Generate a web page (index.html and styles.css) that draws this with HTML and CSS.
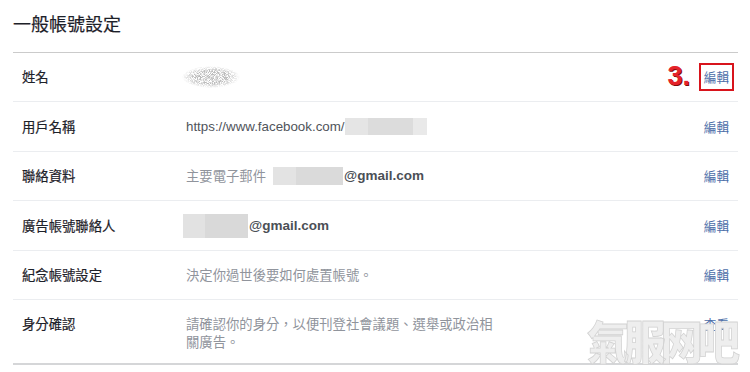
FILE: index.html
```html
<!DOCTYPE html>
<html lang="zh-TW">
<head>
<meta charset="utf-8">
<title>一般帳號設定</title>
<link rel="stylesheet" href="styles.css">
</head>
<body>
<div class="page">
  <h1 class="title">一般帳號設定</h1>
  <div class="rows">
    <div class="row">
      <div class="label">姓名</div>
      <div class="value">
        <svg class="blurname" width="58" height="22" viewBox="0 0 58 22">
          <defs>
            <filter id="noise" x="0" y="0" width="100%" height="100%">
              <feTurbulence type="fractalNoise" baseFrequency="1.2" numOctaves="2" seed="7"/>
              <feColorMatrix type="matrix" values="0 0 0 0 0.5  0 0 0 0 0.5  0 0 0 0 0.5  4 0 0 0 -1.5"/>
            </filter>
            <radialGradient id="fade" cx="0.5" cy="0.5" r="0.5">
              <stop offset="0.6" stop-color="#fff"/>
              <stop offset="1" stop-color="#000"/>
            </radialGradient>
            <mask id="blob">
              <rect width="58" height="22" fill="url(#fade)"/>
            </mask>
          </defs>
          <rect width="58" height="22" filter="url(#noise)" mask="url(#blob)"/>
        </svg>
      </div>
      <a class="edit marked" href="#">編輯<span class="step">3.</span></a>
    </div>
    <div class="row">
      <div class="label">用戶名稱</div>
      <div class="value url">https://www.facebook.com/<span class="mask mask-url"></span></div>
      <a class="edit" href="#">編輯</a>
    </div>
    <div class="row">
      <div class="label">聯絡資料</div>
      <div class="value"><span class="muted cjk">主要電子郵件</span><span class="mask mask-mail"></span><b class="mail">@gmail.com</b></div>
      <a class="edit" href="#">編輯</a>
    </div>
    <div class="row">
      <div class="label">廣告帳號聯絡人</div>
      <div class="value shift"><span class="mask mask-ad"></span><b class="mail">@gmail.com</b></div>
      <a class="edit" href="#">編輯</a>
    </div>
    <div class="row">
      <div class="label">紀念帳號設定</div>
      <div class="value muted cjk">決定你過世後要如何處置帳號。</div>
      <a class="edit" href="#">編輯</a>
    </div>
    <div class="row tall">
      <div class="label">身分確認</div>
      <div class="value muted cjk narrow">請確認你的身分，以便刊登社會議題、選舉或政治相關廣告。</div>
      <a class="edit" href="#">查看</a>
    </div>
  </div>
  <div class="watermark">氣服网吧</div>
</div>
</body>
</html>
```
FILE: styles.css
```css
html, body {
  margin: 0;
  padding: 0;
  background: #ffffff;
}

body {
  font-family: "Liberation Sans", "Noto Sans CJK TC", sans-serif;
  color: #1d2129;
}

.page {
  position: relative;
  width: 725px;
  margin-left: 13px;
}

.title {
  margin: 0;
  box-sizing: border-box;
  height: 53px;
  padding-top: 11px;
  font-family: "Noto Sans CJK TC", sans-serif;
  font-size: 18px;
  line-height: 24px;
  font-weight: 400;
  color: #1d2129;
  -webkit-text-stroke: 0.2px #1d2129;
  border-bottom: 1px solid #cbcbcb;
}

.row {
  display: flex;
  align-items: center;
  box-sizing: border-box;
  height: 49px;
  padding: 0 9px;
  border-bottom: 1px solid #ebedf0;
  font-size: 13.33px;
  line-height: 18px;
}

.row:nth-child(even) {
  height: 50px;
}

.row.tall {
  height: 65px;
  align-items: flex-start;
  padding-top: 15px;
  border-bottom: 2px solid #d5d6d8;
}

.label {
  flex: none;
  width: 164px;
  font-family: "Noto Sans CJK TC", sans-serif;
  font-weight: 400;
  color: #1d2129;
  -webkit-text-stroke: 0.2px #1d2129;
}

.value {
  flex: 1;
  display: flex;
  align-items: center;
  color: #4b4f56;
}

.value.shift {
  margin-left: -3px;
}

.value.narrow {
  display: block;
  flex: none;
  width: 312px;
  margin-right: auto;
}

.cjk {
  font-family: "Noto Sans CJK TC", sans-serif;
}

.muted {
  color: #90949c;
}

.url {
  color: #50545b;
}

.blurname {
  display: block;
  margin-left: -4px;
}

.mail {
  font-weight: bold;
  color: #4b4f56;
  font-size: 13.5px;
}

.mask {
  display: inline-block;
  flex: none;
}

.mask-url {
  width: 82px;
  height: 17px;
  background: linear-gradient(90deg, #e5e5e5 0, #e5e5e5 23px, #dcdcdc 23px, #dcdcdc 68px, #e9e9e9 68px);
}

.mask-mail {
  width: 70px;
  height: 18px;
  margin-left: 7px;
  margin-right: 1px;
  background: linear-gradient(90deg, #e3e3e3 0, #e3e3e3 23px, #dadada 23px, #dadada 70px);
}

.mask-ad {
  width: 65px;
  height: 24px;
  margin-right: 1px;
  background: linear-gradient(90deg, #e2e2e2 0, #e2e2e2 22px, #d9d9d9 22px, #d9d9d9 65px);
}

.edit {
  flex: none;
  position: relative;
  color: #4c6ea8;
  text-decoration: none;
  font-family: "Noto Sans CJK TC", sans-serif;
  font-size: 12.6px;
}

.edit.marked {
  outline: 2.5px solid #d8141c;
  outline-offset: 3px;
}

.step {
  position: absolute;
  right: 39px;
  top: -7px;
  font-family: "Liberation Sans", sans-serif;
  font-weight: bold;
  font-size: 27px;
  line-height: 30px;
  color: #e5232a;
  text-shadow: 1px 1px 0 #7c0a0a;
}

.watermark {
  position: absolute;
  left: 574px;
  top: 312px;
  font-family: "Noto Sans CJK SC", "Noto Sans CJK TC", sans-serif;
  font-weight: 900;
  font-size: 46px;
  line-height: 54px;
  letter-spacing: -6px;
  color: #eeeeee;
  -webkit-text-stroke: 0.8px #d2d2d2;
  transform: scaleX(0.92);
  transform-origin: left top;
  white-space: nowrap;
}
```
